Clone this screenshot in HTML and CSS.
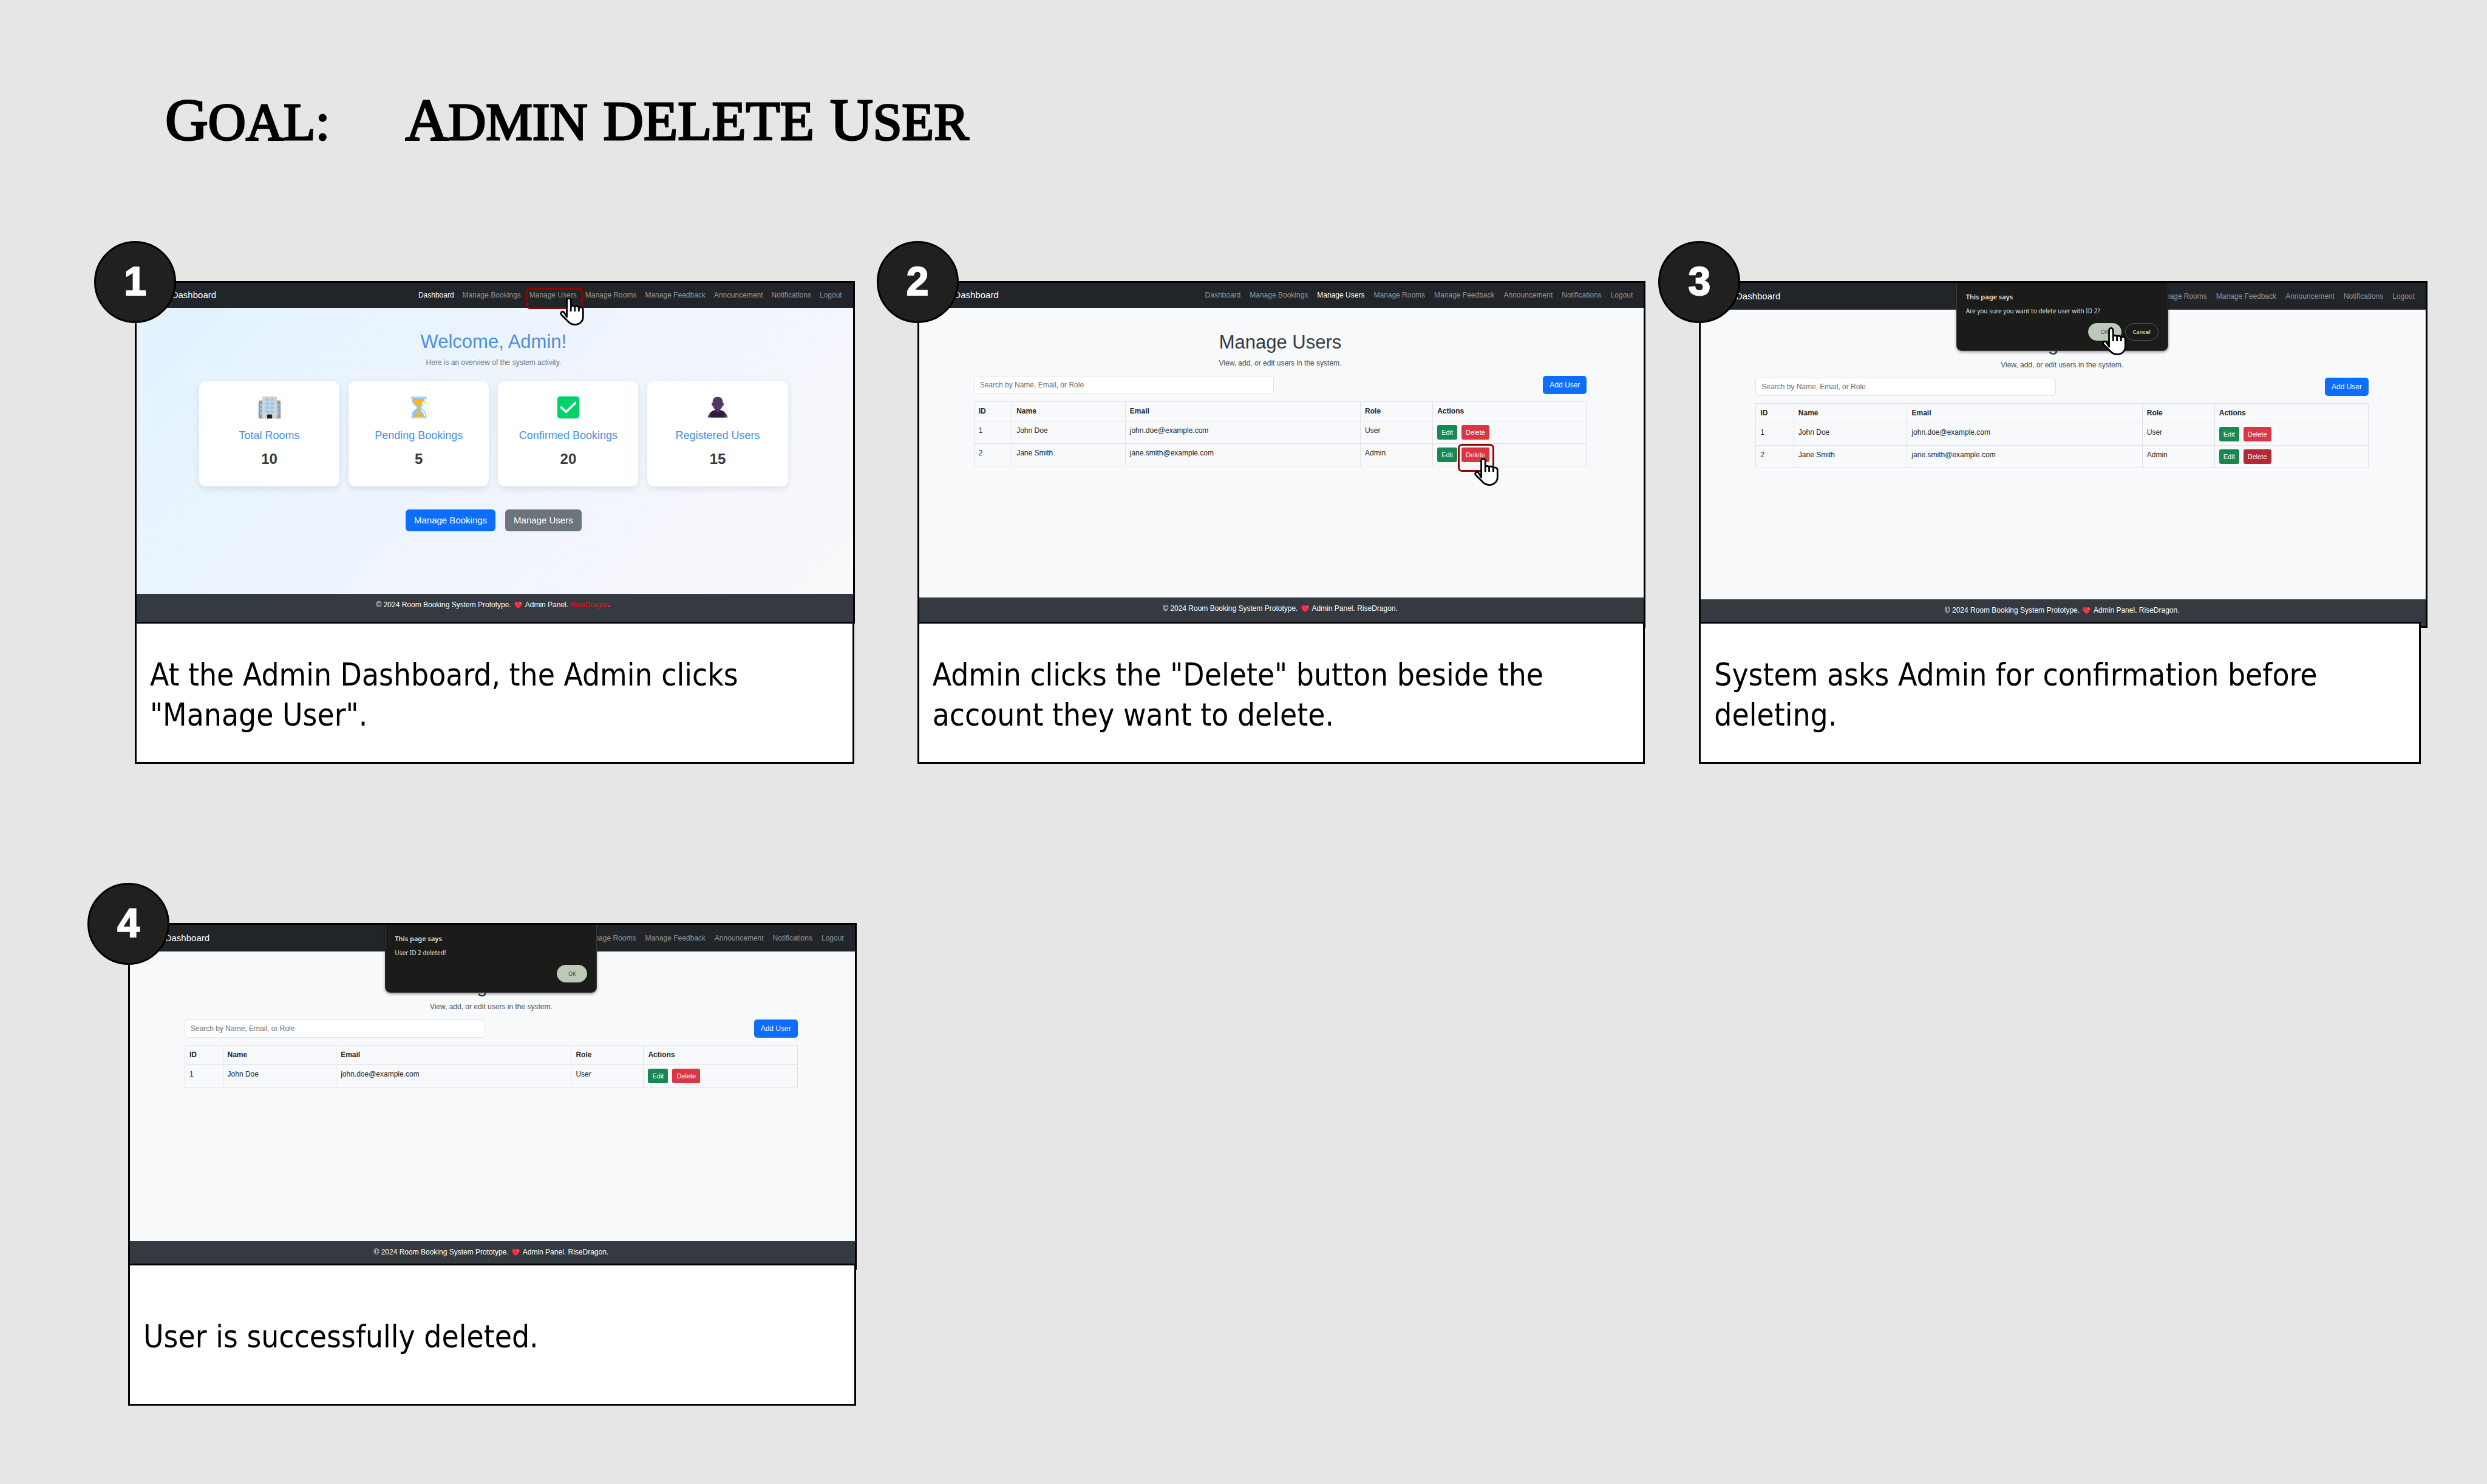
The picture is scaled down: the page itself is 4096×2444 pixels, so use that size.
FILE: index.html
```html
<!DOCTYPE html>
<html lang="en">
<head>
<meta charset="utf-8">
<title>Goal: Admin DELETE User</title>
<link rel="stylesheet" href="styles.css">
</head>
<body>

<svg class="sprite" aria-hidden="true">
  <symbol id="hand" viewBox="0 0 48 56">
    <path d="M13.7 39V5.8a4.05 4.1 0 0 1 8.1 0V18c1-2 6.500-2.500 7.800 1c1.500-3 7-2.500 8.200 1.800c2.500-2.500 8.500-1.500 8.500 4V39c0 9-7.500 15.300-16 15.300c-6 0-10.500-2.500-14-6.200L3 34.800c-3.500-3.800 1.200-8.300 5-5.300Z" fill="#fff" stroke="#000" stroke-width="3.400" stroke-linejoin="round"/>
    <path d="M21.800 17V28M29.600 19V28M37.800 20V28" stroke="#000" stroke-width="3.400" fill="none"/>
  </symbol>
  <symbol id="heart" viewBox="0 0 32 32">
    <path d="M16 30C9 25 1 18 1 10.500C1 5.500 4.500 2 9 2c3 0 5.500 1.500 7 4c1.500-2.500 4-4 7-4c4.500 0 8 3.500 8 8.500C31 18 23 25 16 30Z" fill="#f92f3c"/>
    <path d="M22 5c3-.5 6 2 6 5.500c0 2-2 3-3 1.500c-1-2-3-4-3-7Z" fill="#ff7a78"/>
  </symbol>
  <symbol id="building" viewBox="0 0 46 46">
    <rect x="1" y="9" width="14" height="36" rx="3" fill="#9b9b9b"/>
    <rect x="31" y="9" width="14" height="36" rx="3" fill="#9b9b9b"/>
    <rect x="1" y="30" width="44" height="15" fill="#9b9b9b"/>
    <path d="M4 16h4v5H4zM4 24h4v5H4zM4 32h4v5H4zM38 16h4v5h-4zM38 24h4v5h-4zM38 32h4v5h-4z" fill="#83cbff"/>
    <path d="M8 4q0-3 3-3h24q3 0 3 3v41H8z" fill="#d3d3d3"/>
    <path d="M15 5h7v5h-7zM25 5h6v5h-6zM15 13h7v5h-7zM25 13h6v5h-6zM15 21h7v5h-7zM25 21h6v5h-6zM15 29h7v5h-7zM25 29h6v5h-6z" fill="#83cbff"/>
    <path d="M18 39q0-2 2-2h6q2 0 2 2v6H18z" fill="#1c1c1c"/>
  </symbol>
  <symbol id="hourglass" viewBox="0 0 46 46">
    <path d="M9 3h28v4c0 7-4 11-9 14v4c5 3 9 7 9 13v5H9v-5c0-6 4-10 9-13v-4C13 18 9 14 9 7z" fill="#83cbff"/>
    <path d="M11 7h24c-1 7-5 11-10 12v16c4 0 7 3 8 7H13c1-4 4-7 8-7V19C15 18 11 13 11 7z" fill="#ffb02e"/>
    <path d="M34 7.500c.5 4-1 6.500-5 9M28 29c4 2.500 6 5 6 10" fill="none" stroke="#fff" stroke-width="2.600" stroke-linecap="round"/>
    <rect x="7" y="1" width="32" height="3" rx="1" fill="#d3d3d3"/>
    <rect x="7" y="42" width="32" height="3" rx="1" fill="#d3d3d3"/>
  </symbol>
  <symbol id="check" viewBox="0 0 46 46">
    <rect x="1" y="1" width="44" height="44" rx="6" fill="#00d26a"/>
    <path d="M9 23l9.500 9L37 14" fill="none" stroke="#f4f4f4" stroke-width="4.600" stroke-linecap="round" stroke-linejoin="round"/>
  </symbol>
  <symbol id="person" viewBox="0 0 46 46">
    <path d="M3 43c2-8 8-14 16-15h8c8 1 14 7 16 15z" fill="#533566"/>
    <path d="M9 43V33c3-3 6-5 10-5h8c4 0 7 2 10 5v10z" fill="#321b41"/>
    <path d="M13 12c0-7 4-10 10-10s10 3 10 10v2c3 0 3 6-.5 6c-1 4-3 7-6 8.500V31c0 3-7 3-7 0v-2.500c-3-1.500-5-4.500-6-8.500C10 20 10 14 13 14z" fill="#533566"/>
  </symbol>
</svg>

<header class="title">
  <h1 class="title-line">
    <span class="word lead">Goal:</span>
    <span class="word">Admin</span>
    <span class="word caps">DELETE</span>
    <span class="word">User</span>
  </h1>
</header>

<main class="board">

  <section class="step step-home">
    <span class="badge">1</span>
    <div class="screen">
      <nav class="nav">
        <a class="brand" href="#">Admin Dashboard</a>
        <div class="links">
          <a class="link active" href="#">Dashboard</a>
          <a class="link" href="#">Manage Bookings</a>
          <a class="link marked" href="#">Manage Users<svg class="hand" aria-hidden="true"><use href="#hand"/></svg></a>
          <a class="link" href="#">Manage Rooms</a>
          <a class="link" href="#">Manage Feedback</a>
          <a class="link" href="#">Announcement</a>
          <a class="link" href="#">Notifications</a>
          <a class="link" href="#">Logout</a>
        </div>
      </nav>
      <div class="page home">
        <h2 class="page-title">Welcome, Admin!</h2>
        <p class="page-sub">Here is an overview of the system activity.</p>
        <div class="cards">
          <div class="card"><svg class="card-icon" aria-hidden="true"><use href="#building"/></svg><h3 class="card-title">Total Rooms</h3><p class="card-num">10</p></div>
          <div class="card"><svg class="card-icon" aria-hidden="true"><use href="#hourglass"/></svg><h3 class="card-title">Pending Bookings</h3><p class="card-num">5</p></div>
          <div class="card"><svg class="card-icon" aria-hidden="true"><use href="#check"/></svg><h3 class="card-title">Confirmed Bookings</h3><p class="card-num">20</p></div>
          <div class="card"><svg class="card-icon" aria-hidden="true"><use href="#person"/></svg><h3 class="card-title">Registered Users</h3><p class="card-num">15</p></div>
        </div>
        <div class="home-actions">
          <button class="btn large primary" type="button">Manage Bookings</button>
          <button class="btn large secondary" type="button">Manage Users</button>
        </div>
      </div>
      <footer class="foot">© 2024 Room Booking System Prototype. <svg class="heart" aria-hidden="true"><use href="#heart"/></svg> Admin Panel. <a class="dragon" href="#">RiseDragon</a>.</footer>
    </div>
    <p class="caption">At the Admin Dashboard, the Admin clicks "Manage User".</p>
  </section>

  <section class="step">
    <span class="badge">2</span>
    <div class="screen">
      <nav class="nav">
        <a class="brand" href="#">Admin Dashboard</a>
        <div class="links">
          <a class="link" href="#">Dashboard</a>
          <a class="link" href="#">Manage Bookings</a>
          <a class="link active" href="#">Manage Users</a>
          <a class="link" href="#">Manage Rooms</a>
          <a class="link" href="#">Manage Feedback</a>
          <a class="link" href="#">Announcement</a>
          <a class="link" href="#">Notifications</a>
          <a class="link" href="#">Logout</a>
        </div>
      </nav>
      <div class="page users">
        <h2 class="page-title">Manage Users</h2>
        <p class="page-sub">View, add, or edit users in the system.</p>
        <div class="toolbar">
          <input class="search" type="text" aria-label="Search users" placeholder="Search by Name, Email, or Role">
          <button class="btn primary" type="button">Add User</button>
        </div>
        <table class="table">
          <colgroup><col class="c-id"><col class="c-name"><col class="c-email"><col class="c-role"><col></colgroup>
          <thead><tr><th>ID</th><th>Name</th><th>Email</th><th>Role</th><th>Actions</th></tr></thead>
          <tbody>
            <tr><td>1</td><td>John Doe</td><td>john.doe@example.com</td><td>User</td><td><div class="row-actions"><button class="btn small success" type="button">Edit</button><button class="btn small danger" type="button">Delete</button></div></td></tr>
            <tr><td>2</td><td>Jane Smith</td><td>jane.smith@example.com</td><td>Admin</td><td><div class="row-actions"><button class="btn small success" type="button">Edit</button><button class="btn small danger marked" type="button">Delete<svg class="hand" aria-hidden="true"><use href="#hand"/></svg></button></div></td></tr>
          </tbody>
        </table>
      </div>
      <footer class="foot">© 2024 Room Booking System Prototype. <svg class="heart" aria-hidden="true"><use href="#heart"/></svg> Admin Panel. RiseDragon.</footer>
    </div>
    <p class="caption">Admin clicks the "Delete" button beside the account they want to delete.</p>
  </section>

  <section class="step step-confirm">
    <span class="badge">3</span>
    <div class="screen">
      <nav class="nav tall">
        <a class="brand" href="#">Admin Dashboard</a>
        <div class="links">
          <a class="link" href="#">Manage Rooms</a>
          <a class="link" href="#">Manage Feedback</a>
          <a class="link" href="#">Announcement</a>
          <a class="link" href="#">Notifications</a>
          <a class="link" href="#">Logout</a>
        </div>
      </nav>
      <div class="page users">
        <h2 class="page-title">Manage Users</h2>
        <p class="page-sub">View, add, or edit users in the system.</p>
        <div class="toolbar">
          <input class="search" type="text" aria-label="Search users" placeholder="Search by Name, Email, or Role">
          <button class="btn primary" type="button">Add User</button>
        </div>
        <table class="table">
          <colgroup><col class="c-id"><col class="c-name"><col class="c-email"><col class="c-role"><col></colgroup>
          <thead><tr><th>ID</th><th>Name</th><th>Email</th><th>Role</th><th>Actions</th></tr></thead>
          <tbody>
            <tr><td>1</td><td>John Doe</td><td>john.doe@example.com</td><td>User</td><td><div class="row-actions"><button class="btn small success" type="button">Edit</button><button class="btn small danger" type="button">Delete</button></div></td></tr>
            <tr><td>2</td><td>Jane Smith</td><td>jane.smith@example.com</td><td>Admin</td><td><div class="row-actions"><button class="btn small success" type="button">Edit</button><button class="btn small danger pressed" type="button">Delete</button></div></td></tr>
          </tbody>
        </table>
      </div>
      <footer class="foot">© 2024 Room Booking System Prototype. <svg class="heart" aria-hidden="true"><use href="#heart"/></svg> Admin Panel. RiseDragon.</footer>
      <div class="dialog" role="dialog" aria-label="Confirm delete">
        <p class="dialog-title">This page says</p>
        <p class="dialog-text">Are you sure you want to delete user with ID 2?</p>
        <div class="dialog-actions">
          <button class="pill ok" type="button">OK<svg class="hand" aria-hidden="true"><use href="#hand"/></svg></button>
          <button class="pill cancel" type="button">Cancel</button>
        </div>
      </div>
    </div>
    <p class="caption">System asks Admin for confirmation before deleting.</p>
  </section>

  <section class="step step-done">
    <span class="badge">4</span>
    <div class="screen">
      <nav class="nav tall">
        <a class="brand" href="#">Admin Dashboard</a>
        <div class="links">
          <a class="link" href="#">Manage Rooms</a>
          <a class="link" href="#">Manage Feedback</a>
          <a class="link" href="#">Announcement</a>
          <a class="link" href="#">Notifications</a>
          <a class="link" href="#">Logout</a>
        </div>
      </nav>
      <div class="page users">
        <h2 class="page-title">Manage Users</h2>
        <p class="page-sub">View, add, or edit users in the system.</p>
        <div class="toolbar">
          <input class="search" type="text" aria-label="Search users" placeholder="Search by Name, Email, or Role">
          <button class="btn primary" type="button">Add User</button>
        </div>
        <table class="table">
          <colgroup><col class="c-id"><col class="c-name"><col class="c-email"><col class="c-role"><col></colgroup>
          <thead><tr><th>ID</th><th>Name</th><th>Email</th><th>Role</th><th>Actions</th></tr></thead>
          <tbody>
            <tr><td>1</td><td>John Doe</td><td>john.doe@example.com</td><td>User</td><td><div class="row-actions"><button class="btn small success" type="button">Edit</button><button class="btn small danger" type="button">Delete</button></div></td></tr>
          </tbody>
        </table>
      </div>
      <footer class="foot">© 2024 Room Booking System Prototype. <svg class="heart" aria-hidden="true"><use href="#heart"/></svg> Admin Panel. RiseDragon.</footer>
      <div class="dialog" role="dialog" aria-label="User deleted">
        <p class="dialog-title">This page says</p>
        <p class="dialog-text">User ID 2 deleted!</p>
        <div class="dialog-actions">
          <button class="pill ok" type="button">OK</button>
        </div>
      </div>
    </div>
    <p class="caption">User is successfully deleted.</p>
  </section>

</main>
</body>
</html>
```
FILE: styles.css
```css
* { box-sizing: border-box; }

body {
  margin: 0;
  background: #e6e6e6;
  font-family: "Liberation Sans", Arial, sans-serif;
  font-size: 12px;
  line-height: 18px;
  color: #212529;
}

h1, h2, h3, p { margin: 0; font-weight: 400; }
a { color: inherit; text-decoration: none; }
button, input { font: inherit; }
.sprite { display: none; }

/* Board heading, large initials over smaller capitals */
.title { padding: 147px 102px 0 272px; }
.title-line {
  display: flex;
  gap: 26px;
  align-items: baseline;
  height: 100px;
  font-family: "Liberation Serif", "Times New Roman", serif;
  font-size: 86px;
  line-height: 100px;
  color: #000;
  -webkit-text-stroke: 3px #000;
}
.word { display: block; text-transform: uppercase; }
.word::first-letter { font-size: 98px; line-height: 100px; }
.word.caps, .word.caps::first-letter { font-size: 92px; }
.word.lead { margin-right: 98px; }

.board {
  display: grid;
  grid-template-columns: repeat(3, 1fr);
  gap: 262px 88px;
  padding: 216px 98px 129px 223px;
}

.step { position: relative; }
.step-home { margin: 0 15px 0 -1px; }
.step-done { margin: 0 12px 0 -12px; }

.badge {
  position: absolute;
  z-index: 3;
  left: -67px;
  top: -66px;
  width: 135px;
  height: 135px;
  border: 3px solid #000;
  border-radius: 50%;
  background: #21201e;
  color: #fff;
  font-family: "Liberation Sans Narrow", "Liberation Sans", sans-serif;
  font-weight: 700;
  font-size: 66px;
  line-height: 127px;
  text-align: center;
  -webkit-text-stroke: 2px #fff;
}

.screen {
  position: relative;
  display: flex;
  flex-direction: column;
  min-height: 571px;
  border: 3px solid #000;
  background: #f8f9fb;
}
.step-home .screen { min-height: 564px; }

.caption {
  position: relative;
  z-index: 2;
  display: flex;
  align-items: center;
  min-height: 234px;
  margin-top: -10px;
  margin-right: 1px;
  padding: 8px 120px 0 22px;
  border: 3px solid #000;
  background: #fff;
  color: #000;
  font-family: "DejaVu Sans Condensed", "Noto Sans", sans-serif;
  font-size: 51px;
  line-height: 66px;
}
.step-home .caption { margin-top: -3px; }
.step-confirm .caption { margin-right: 11px; }

/* Navigation bar */
.nav {
  display: flex;
  justify-content: space-between;
  align-items: center;
  height: 41px;
  padding: 0 18px 2px 11px;
  background: #212529;
  color: #929496;
}
.nav.tall { height: 44px; padding-top: 2px; }
.brand { font-size: 15px; color: #fff; }
.links { display: flex; gap: 15px; }
.step-home .links { gap: 14px; }
.link { position: relative; white-space: nowrap; }
.link.active { color: #fff; }

/* Highlight frame and pointer */
.marked { position: relative; }
.marked::after {
  content: "";
  position: absolute;
  border: 3px solid #950000;
  border-radius: 7px;
}
.link.marked::after { left: -6px; right: -10px; top: -3px; height: 29px; }
.btn.marked::after { left: -6px; right: -8px; top: -6px; height: 40px; }
.hand { position: absolute; z-index: 1; width: 40px; height: 46px; }
.link .hand { left: 50px; top: 13px; }
.btn .hand { left: 21px; top: 17px; }
.pill .hand { left: 22px; top: 6px; }

/* Page content */
.page { min-height: 477px; text-align: center; }
.home {
  min-height: 471px;
  padding: 37px 107px 0 103px;
  background: linear-gradient(135deg, #e1f3fe, #f0f4fd 55%, #f8f9fa);
}
.users { padding: 38px 94px 0 90px; }
.page-title { font-size: 31px; line-height: 38px; color: #343a40; }
.page-sub { margin-top: 6px; color: #4a4f55; }
.home .page-title { color: #4a90e2; }
.home .page-sub { color: #6c757d; }

.cards {
  display: grid;
  grid-template-columns: repeat(4, 1fr);
  gap: 15px;
  margin-top: 22px;
}
.card {
  min-height: 173px;
  padding-top: 24px;
  border-radius: 11px;
  background: #fff;
  box-shadow: 0 4px 12px rgba(0, 0, 0, .09);
}
.card-icon { display: block; width: 38px; height: 38px; margin: 0 auto; }
.card-title { margin-top: 15px; font-size: 18px; line-height: 24px; color: #4a90e2; }
.card-num { margin-top: 12px; font-size: 24px; line-height: 30px; font-weight: 700; color: #343a40; }

.home-actions { display: flex; justify-content: center; gap: 16px; margin-top: 38px; }

.btn {
  padding: 0 11px;
  border: 0;
  border-radius: 5px;
  color: #fff;
  white-space: nowrap;
}
.btn.large { height: 36px; padding: 0 14px; font-size: 15px; border-radius: 6px; }
.btn.small { height: 24px; padding: 0 7px; font-size: 11px; border-radius: 3px; }
.primary { background: #0d6efd; }
.secondary { background: #6c757d; }
.success { background: #198754; }
.danger { background: #dc3545; }
.danger.pressed { background: #b02a37; }

.toolbar { display: flex; justify-content: space-between; height: 30px; margin-top: 12px; }
.search {
  width: 49%;
  padding: 0 9px;
  border: 1px solid #dee2e6;
  border-radius: 5px;
  background: #fff;
}
.search::placeholder { color: #6c7177; opacity: 1; }

.table {
  width: 100%;
  margin-top: 12px;
  border-collapse: collapse;
  table-layout: fixed;
  text-align: left;
  line-height: 19px;
}
.table th, .table td { padding: 6px 6px 6px 7px; border: 1px solid #dee2e6; vertical-align: top; }
.c-id { width: 6.2%; }
.c-name { width: 18.5%; }
.c-email { width: 38.4%; }
.c-role { width: 11.8%; }
.row-actions { display: flex; gap: 7px; }

.foot {
  flex: 1;
  padding: 9px 4px 0 0;
  background: #343a40;
  color: #fff;
  text-align: center;
}
.heart { width: 13px; height: 13px; margin: 0 2px; vertical-align: -3px; }
.dragon { color: #f01010; }

/* Browser dialog, hanging from the top of the screen */
.dialog {
  position: absolute;
  z-index: 1;
  top: 0;
  left: 0;
  right: 4px;
  width: 349px;
  margin: 0 auto;
  padding: 14px 15px 16px;
  border: 1px solid #3a3a38;
  border-top: 0;
  border-radius: 0 0 9px 9px;
  background: #1b1b19;
  box-shadow: 0 2px 4px rgba(0, 0, 0, .4);
  color: #e3e3df;
  font-family: "Noto Sans", "Open Sans", sans-serif;
}
.dialog-title { font-size: 11px; font-weight: 600; line-height: 18px; }
.dialog-text { margin-top: 6px; font-size: 10px; line-height: 16px; }
.dialog-actions { display: flex; justify-content: flex-end; gap: 6px; margin-top: 12px; }
.pill {
  position: relative;
  width: 55px;
  height: 29px;
  padding: 0;
  border: 1px solid #bdcab8;
  border-radius: 15px;
  font-size: 9px;
}
.ok { background: #bdcab8; color: #384436; }
.cancel { background: transparent; border-color: #555a54; color: #c5d5bd; font-weight: 600; }
.step-done .ok { width: 50px; }
```
